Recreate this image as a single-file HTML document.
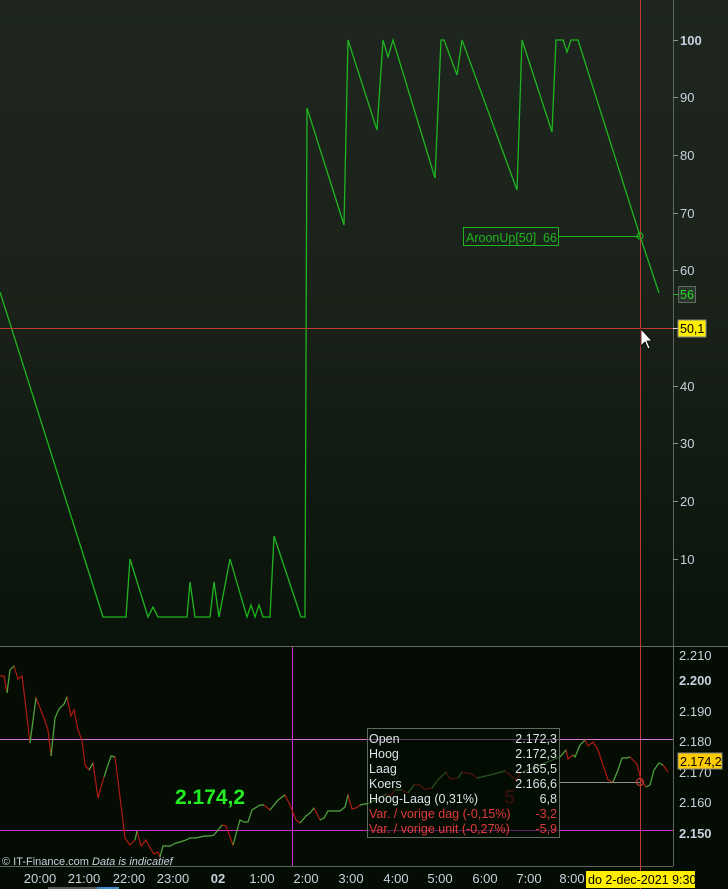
<!DOCTYPE html>
<html><head><meta charset="utf-8"><style>
html,body{margin:0;padding:0;width:728px;height:889px;overflow:hidden;background:#040c04}
svg{display:block}
text{font-family:"Liberation Sans",sans-serif}
</style></head><body>
<svg width="728" height="889" viewBox="0 0 728 889" xmlns="http://www.w3.org/2000/svg">
<defs>
<linearGradient id="tg" x1="0" y1="0" x2="0" y2="1">
<stop offset="0" stop-color="#1f2620"/>
<stop offset="0.45" stop-color="#1a2219"/>
<stop offset="1" stop-color="#09130a"/>
</linearGradient>
</defs>
<rect x="0" y="0" width="728" height="646" fill="url(#tg)"/>
<rect x="0" y="646" width="728" height="243" fill="#040c04"/>
<line x1="0" y1="646.5" x2="728" y2="646.5" stroke="#5f6d60" stroke-width="1"/>
<line x1="673.5" y1="0" x2="673.5" y2="866" stroke="#5a665c" stroke-width="1"/>
<line x1="0" y1="866.5" x2="673" y2="866.5" stroke="#5a665c" stroke-width="1"/>

<g fill="#c8d2de" font-size="13">
<text x="680" y="45" font-weight="bold">100</text>
<text x="680" y="102">90</text>
<text x="680" y="160">80</text>
<text x="680" y="218">70</text>
<text x="680" y="275">60</text>
<text x="680" y="391">40</text>
<text x="680" y="448">30</text>
<text x="680" y="506">20</text>
<text x="680" y="564">10</text>
</g>
<g stroke="#8a948c">
<line x1="673" y1="40.5" x2="678" y2="40.5"/><line x1="673" y1="97.5" x2="678" y2="97.5"/>
<line x1="673" y1="155.5" x2="678" y2="155.5"/><line x1="673" y1="213.5" x2="678" y2="213.5"/>
<line x1="673" y1="270.5" x2="678" y2="270.5"/><line x1="673" y1="386.5" x2="678" y2="386.5"/>
<line x1="673" y1="443.5" x2="678" y2="443.5"/><line x1="673" y1="501.5" x2="678" y2="501.5"/>
<line x1="673" y1="559.5" x2="678" y2="559.5"/>
</g>

<polyline fill="none" stroke="#1fb51f" stroke-width="1.3" points="0,292 103,617 126,617 130,559 148,617 153,607 158,617 187,617 190,582 195,617 210,617 214,582 219,617 230,559 247,617 251,605 255,617 259,605 263,617 270,617 274,536 301,617 305,617 307,108 344,225 348,40 377,130 383,40 388,57 393,40 435,178 441,40 444,40 457,75 462,40 517,190 522,40 552,132 556,40 563,40 567,52 571,40 578,40 640,236 659,293"/>

<line x1="0" y1="328.5" x2="673" y2="328.5" stroke="#c03838" stroke-width="1"/>
<line x1="640.5" y1="0" x2="640.5" y2="889" stroke="#c03838" stroke-width="1"/>

<line x1="559" y1="236.5" x2="640" y2="236.5" stroke="#1fb51f"/>
<circle cx="640" cy="236" r="3" fill="none" stroke="#1fb51f" stroke-width="1.2"/>
<rect x="463.5" y="227.5" width="95" height="18" fill="none" stroke="#1fb51f"/>
<text x="466" y="242" fill="#1fb51f" font-size="12.5">AroonUp[50]</text>
<text x="543" y="242" fill="#1fb51f" font-size="12.5">66</text>
<line x1="673" y1="294.5" x2="678" y2="294.5" stroke="#1fb51f"/>
<rect x="678.5" y="286.5" width="17" height="16" fill="#2a332c" stroke="#5f6d60"/>
<text x="680" y="299" fill="#22dd22" font-size="12.5">56</text>
<line x1="673" y1="328.5" x2="678" y2="328.5" stroke="#ddd"/>
<rect x="678" y="320" width="28" height="17" fill="#ffee00" stroke="#888"/>
<text x="680" y="333" fill="#000" font-size="12.5">50,1</text>
<path d="M641,329 L641,346 L645,342 L648,349 L650,348 L647,341 L652,341 Z" fill="#fff" stroke="#000" stroke-width="0.8"/>

<line x1="0" y1="739.5" x2="673" y2="739.5" stroke="#d77ad7"/>
<line x1="0" y1="830.5" x2="673" y2="830.5" stroke="#cc33cc"/>
<line x1="292.5" y1="647" x2="292.5" y2="866" stroke="#cc33cc"/>
<line x1="560" y1="782.5" x2="640" y2="782.5" stroke="#8a948c"/>

<polyline fill="none" stroke="#b01a10" stroke-width="1.2" points="0,676 4,676 7,693 10,670 14,666 18,679 22,676 25,700 30,743 36,698 44,718 48,730 51,756 55,718 59,709 64,704 67,697 71,716 74,710 78,730 82,740 85,765 89,770 93,763 98,798 104,777 111,756 115,757 119,789 125,838 130,845 135,840 137,831 141,846 146,840 150,848 154,854 158,852 160,857 163,846 170,846 176,843 180,842 186,840 190,838 196,838 200,837 205,836 210,836 214,835 222,825 226,826 233,845 240,820 244,822 248,822 252,810 260,805 264,805 270,810 278,800 285,795 290,805 296,820 300,823 306,816 310,813 314,808 320,820 324,818 328,811 340,811 345,807 348,795 352,809 356,808 360,805 370,803 375,800 380,798 386,794 390,796 395,790 402,790 408,793 414,785 420,785 424,789 432,788 437,781 446,772 450,779 458,778 462,772 472,774 477,778 490,775 505,771 516,780 520,773 560,757 566,750 568,759 573,755 575,757 580,745 585,740 588,746 593,742 598,750 608,780 613,782 618,770 622,758 627,758 630,757 637,764 641,780 646,787 650,785 654,770 659,763 663,765 668,772"/>
<g fill="none" stroke="#3fa83f" stroke-width="1.2">
<polyline points="7,693 10,670 14,666"/><polyline points="30,743 36,698"/><polyline points="51,756 55,718 59,709 64,704 67,697"/>
<polyline points="89,770 93,763"/><polyline points="104,777 111,756 115,757"/><polyline points="135,840 137,831"/>
<polyline points="160,857 163,846 170,846 176,843 180,842 186,840 190,838 196,838 200,837 205,836 210,836 214,835 222,825"/>
<polyline points="233,845 240,820 244,822 248,822 252,810 260,805 264,805"/><polyline points="270,810 278,800 285,795"/>
<polyline points="300,823 306,816 310,813 314,808"/><polyline points="320,820 324,818 328,811 340,811 345,807 348,795"/>
<polyline points="360,805 370,803 375,800 380,798 386,794"/><polyline points="395,790 402,790"/><polyline points="408,793 414,785"/>
<polyline points="432,788 437,781 446,772"/><polyline points="458,778 462,772"/><polyline points="477,778 490,775 505,771"/>
<polyline points="520,773 560,757 566,750"/><polyline points="573,755 575,757 580,745 585,740"/><polyline points="613,782 618,770 622,758 627,758 630,757"/>
<polyline points="646,787 650,785 654,770 659,763 663,765"/>
</g>
<circle cx="640" cy="782" r="3.5" fill="none" stroke="#c03838" stroke-width="1.2"/>

<g fill="#c8d2de" font-size="13">
<text x="679" y="660">2.210</text>
<text x="679" y="685" font-weight="bold">2.200</text>
<text x="679" y="716">2.190</text>
<text x="679" y="746">2.180</text>
<text x="679" y="777">2.170</text>
<text x="679" y="807">2.160</text>
<text x="679" y="838" font-weight="bold">2.150</text>
</g>
<rect x="678" y="753" width="44" height="16" fill="#ffcc00" stroke="#888"/>
<text x="680" y="766" fill="#000" font-size="12.5">2.174,2</text>

<text x="175" y="804" fill="#22ee22" font-size="21" font-weight="bold">2.174,2</text>
<text x="504" y="804" fill="#5a1410" font-size="20" font-weight="bold">5</text>
<text x="2" y="865" fill="#c8d2de" font-size="11">© IT-Finance.com  <tspan font-style="italic">Data is indicatief</tspan></text>

<rect x="367.5" y="728.5" width="192" height="109" fill="rgba(4,12,4,0.55)" stroke="#5f6d60"/>
<g font-size="12.5" fill="#dde3ea">
<text x="369" y="743">Open</text><text x="557" y="743" text-anchor="end">2.172,3</text>
<text x="369" y="758">Hoog</text><text x="557" y="758" text-anchor="end">2.172,3</text>
<text x="369" y="773">Laag</text><text x="557" y="773" text-anchor="end">2.165,5</text>
<text x="369" y="788">Koers</text><text x="557" y="788" text-anchor="end">2.166,6</text>
<text x="369" y="803">Hoog-Laag (0,31%)</text><text x="557" y="803" text-anchor="end">6,8</text>
</g>
<g font-size="12.5" fill="#e03a3a">
<text x="369" y="818">Var. / vorige dag (-0,15%)</text><text x="557" y="818" text-anchor="end">-3,2</text>
<text x="369" y="833">Var. / vorige unit (-0,27%)</text><text x="557" y="833" text-anchor="end">-5,9</text>
</g>

<g fill="#c8d2de" font-size="13" text-anchor="middle">
<text x="40" y="883">20:00</text><text x="84" y="883">21:00</text><text x="129" y="883">22:00</text>
<text x="173" y="883">23:00</text><text x="218" y="883" font-weight="bold">02</text><text x="262" y="883">1:00</text>
<text x="306" y="883">2:00</text><text x="351" y="883">3:00</text><text x="396" y="883">4:00</text>
<text x="440" y="883">5:00</text><text x="485" y="883">6:00</text><text x="529" y="883">7:00</text><text x="572" y="883">8:00</text>
</g>
<rect x="48" y="887" width="50" height="2" fill="#555"/><rect x="97" y="887" width="22" height="2" fill="#3a8ad0"/>
<rect x="586" y="871" width="109" height="17" fill="#ffee00"/>
<text x="588" y="884" fill="#000" font-size="12.5">do 2-dec-2021 9:30</text>
</svg>
</body></html>
